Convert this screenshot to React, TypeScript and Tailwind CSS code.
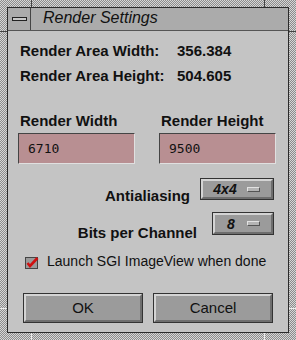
import React from "react";

function Bevel({ children, className = "" }: { children?: React.ReactNode; className?: string }) {
  return (
    <div className={"shrink-0 border border-[#333] " + className}>
      <div className="w-full h-full border-t-2 border-l-2 border-t-[#d4d4d4] border-l-[#d4d4d4] border-b-2 border-r-2 border-b-[#6e6e6e] border-r-[#6e6e6e] bg-[#9b9b9b] flex items-center">
        {children}
      </div>
    </div>
  );
}

function Option({ label, className = "" }: { label: string; className?: string }) {
  return (
    <Bevel className={className}>
      <span className="flex-1 text-center italic font-bold text-[14px] leading-none text-[#111]">{label}</span>
      <span className="mr-[11px] w-[13px] h-[5px] bg-[#b4b4b4] border-t border-l border-t-[#e2e2e2] border-l-[#e2e2e2] border-b border-r border-b-[#555] border-r-[#555]" />
    </Bevel>
  );
}

export default function App() {
  return (
    <div className="w-[296px] h-[340px] relative overflow-hidden bg-[repeating-conic-gradient(#8c8c8c_0_25%,#d6d6d6_0_50%)] bg-[length:2px_2px] p-[7px] font-['Liberation_Sans',Arial,sans-serif] text-[#111]">
      <div className="absolute left-[31px] top-0 w-[1px] h-[7px] bg-[#444]" />
      <div className="absolute right-[31px] top-0 w-[1px] h-[7px] bg-[#444]" />
      <div className="absolute left-0 top-[31px] h-[1px] w-[7px] bg-[#444]" />
      <div className="absolute right-0 top-[31px] h-[1px] w-[7px] bg-[#444]" />
      <div className="absolute left-[31px] bottom-0 w-[1px] h-[7px] bg-[#eee]" />
      <div className="absolute right-[31px] bottom-0 w-[1px] h-[7px] bg-[#eee]" />
      <div className="absolute left-0 bottom-[31px] h-[1px] w-[7px] bg-[#eee]" />
      <div className="absolute right-0 bottom-[31px] h-[1px] w-[7px] bg-[#eee]" />
      <div className="w-full h-full border border-[#2a2a2a] flex flex-col bg-[#c4c4c4]">
        <div className="shrink-0 h-[23px] flex border-b border-[#555] bg-[#ababab]">
          <div className="w-[23px] border-r border-[#444] flex items-center justify-center">
            <div className="w-[15px] h-[4px] bg-[#c8c8c8] border border-[#222]" />
          </div>
          <div className="pl-[12px] pb-[2px] flex items-center italic text-[16px] text-[#111] leading-none">Render Settings</div>
        </div>
        <div className="flex-1 flex flex-col px-[10px] pt-[8px] font-bold text-[15px]">
          <div className="flex h-[25px] items-center pl-[2px]">
            <span className="w-[157px]">Render Area Width:</span>
            <span>356.384</span>
          </div>
          <div className="flex h-[25px] items-center pl-[2px]">
            <span className="w-[157px]">Render Area Height:</span>
            <span>504.605</span>
          </div>
          <div className="flex gap-[24px] mt-[23px]">
            <div className="flex flex-col w-[117px]">
              <span className="h-[18px] leading-[18px] pl-[2px]">Render Width</span>
              <div className="mt-[3px] h-[31px] border border-[#e0e0e0] border-t-[#444] border-l-[#444] bg-[#b88f92] flex items-center pl-[9px] font-normal font-['DejaVu_Sans_Mono',monospace] text-[13px]">6710</div>
            </div>
            <div className="flex flex-col w-[117px]">
              <span className="h-[18px] leading-[18px] pl-[2px]">Render Height</span>
              <div className="mt-[3px] h-[31px] border border-[#e0e0e0] border-t-[#444] border-l-[#444] bg-[#b88f92] flex items-center pl-[9px] font-normal font-['DejaVu_Sans_Mono',monospace] text-[13px]">9500</div>
            </div>
          </div>
          <div className="flex items-start justify-end mt-[14px] pr-[4px]">
            <span className="mt-[9px] leading-[17px] mr-[10px]">Antialiasing</span>
            <Option label="4x4" className="w-[74px] h-[22px]" />
          </div>
          <div className="flex items-start justify-end mt-[8px] pr-[4px]">
            <span className="mt-[12px] leading-[17px] mr-[15px]">Bits per Channel</span>
            <Option label="8" className="w-[62px] h-[23px]" />
          </div>
          <div className="flex items-start mt-[12px] pl-[7px] font-normal">
            <svg width="14" height="14" viewBox="0 0 14 14" className="mt-[3px] shrink-0">
              <rect x="0.5" y="1.5" width="12" height="11" fill="#9a9a9a" stroke="#444" />
              <path d="M2.5 7 L5 10 L12.5 2" stroke="#d01010" strokeWidth="2.6" fill="none" />
            </svg>
            <span className="ml-[8px] text-[14px] leading-[17px] whitespace-nowrap">Launch SGI ImageView when done</span>
          </div>
          <div className="flex gap-[10px] mt-[23px] pl-[5px]">
            <Bevel className="w-[120px] h-[30px]"><span className="flex-1 text-center font-normal text-[15px]">OK</span></Bevel>
            <Bevel className="w-[120px] h-[30px]"><span className="flex-1 text-center font-normal text-[15px]">Cancel</span></Bevel>
          </div>
        </div>
      </div>
    </div>
  );
}
